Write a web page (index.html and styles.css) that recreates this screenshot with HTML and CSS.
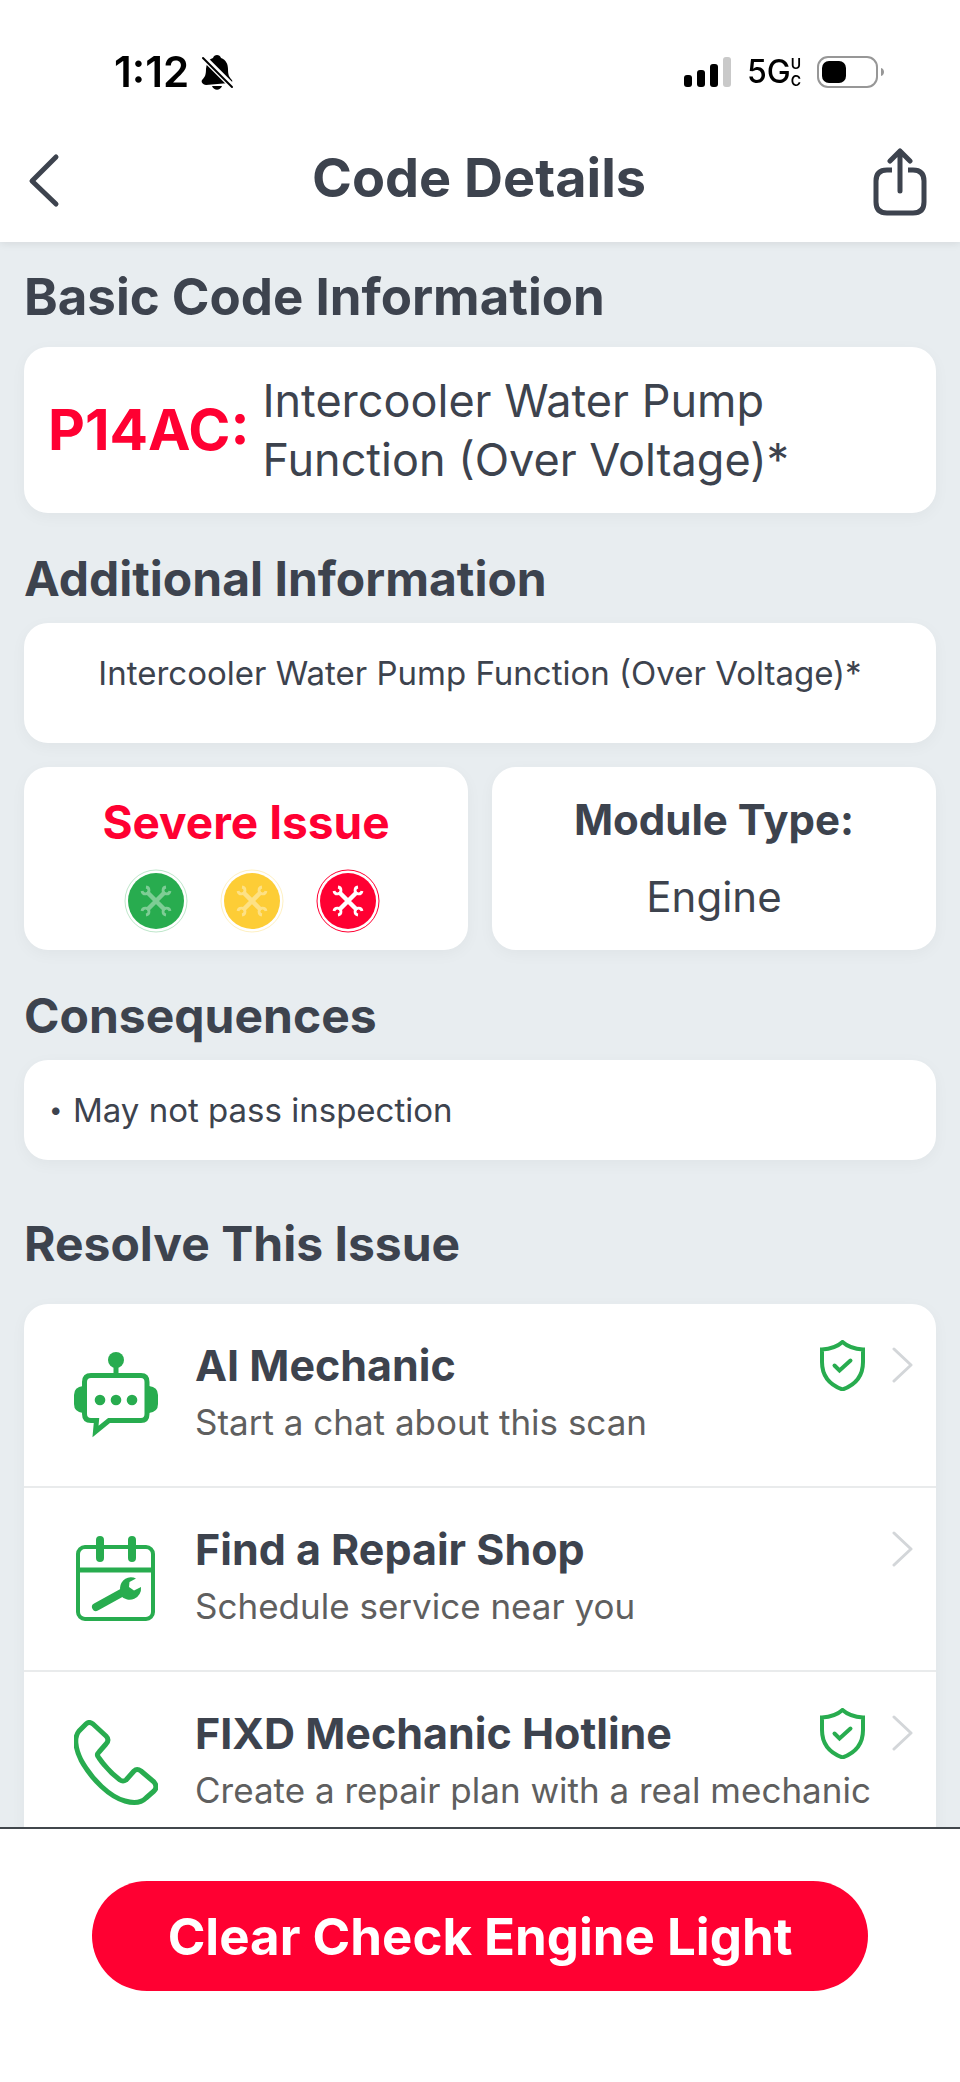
FILE: index.html
```html
<!DOCTYPE html>
<html lang="en">
<head>
  <meta charset="UTF-8" />
  <meta name="viewport" content="width=device-width, initial-scale=1" />
  <title>Code Details</title>
  <link rel="stylesheet" href="styles.css">
</head>
<body>
  <!-- Shared icons -->
  <svg class="sprite" aria-hidden="true">
    <symbol id="wrenches" viewBox="0 0 64 64">
      <g fill="none" stroke="currentColor">
        <path stroke-width="4.5" d="M23 23L41 41M41 23L23 41" />
        <path stroke-width="2.8" d="M22 18A3.5 3.5 0 1 1 18 22M42 18A3.5 3.5 0 1 0 46 22M22 46A3.5 3.5 0 1 0 18 42M42 46A3.5 3.5 0 1 1 46 42" />
      </g>
    </symbol>
    <symbol id="shield" viewBox="0 0 45 51">
      <g fill="none" stroke="currentColor" stroke-width="4">
        <path d="M22.5 2C17 7 10 9 2 9.5V22C2 36 10 45 22.5 49.5C35 45 43 36 43 22V9.5C35 9 28 7 22.5 2Z" />
        <path stroke-linecap="round" d="M14.5 25.5L19.5 30.5L30.5 20.5" />
      </g>
    </symbol>
    <symbol id="chevron" viewBox="0 0 21 36">
      <path fill="none" stroke="currentColor" stroke-width="3" stroke-linecap="round" stroke-linejoin="round" d="M2 2L19 18L2 34" />
    </symbol>
  </svg>

  <div class="app">
    <header class="header">
      <div class="status">
        <span class="time">1:12</span>
        <svg class="bell" viewBox="0 0 33 35" aria-hidden="true">
          <path d="M5 30C1 29 0 27 1 25C4 22 5 20 5 14C6 6 9 4 12 3C13-1 19-1 20 3C25 5 27 9 27 14C27 20 28 22 31 25C32 28 30 28 28 28Z" />
          <path d="M11 31H21C19 36 13 36 11 31Z" />
          <path stroke="#fff" stroke-width="6" d="M1 1L33 33" />
          <path stroke="#000" stroke-width="2" stroke-linecap="round" d="M2 3L31 32" />
        </svg>
        <div class="status-right">
          <svg class="signal" viewBox="0 0 47 30" aria-hidden="true">
            <rect x="0" y="18" width="8" height="12" rx="3" />
            <rect x="13" y="13" width="8" height="17" rx="3" />
            <rect x="26" y="7" width="8" height="23" rx="3" />
            <rect x="39" y="0" width="8" height="30" rx="3" fill="#c9c9c9" />
          </svg>
          <span class="network">5G<span class="uc"><span>U</span><span>C</span></span></span>
          <svg class="battery" viewBox="0 0 68 32" aria-hidden="true">
            <rect x="1" y="1" width="59" height="30" rx="10" fill="none" stroke="#979797" stroke-width="2" />
            <rect x="5" y="5" width="24" height="22" rx="7" />
            <path fill="#979797" d="M64 12C68 13 68 19 64 20Z" />
          </svg>
        </div>
      </div>
      <nav class="nav">
        <button class="nav-button" type="button" aria-label="Back">
          <svg class="back" viewBox="0 0 30 54" aria-hidden="true"><path d="M27 2L3 26L27 49" /></svg>
        </button>
        <h1>Code Details</h1>
        <button class="nav-button" type="button" aria-label="Share">
          <svg class="share" viewBox="0 0 54 68" aria-hidden="true">
            <path d="M19 22H14Q3 22 3 33V54Q3 65 14 65H40Q51 65 51 54V33Q51 22 40 22H35" />
            <path stroke-linecap="round" stroke-linejoin="round" d="M27 43V3M17 13L27 3L37 13" />
          </svg>
        </button>
      </nav>
    </header>

    <main class="content">
      <section class="basic">
        <h2>Basic Code Information</h2>
        <div class="card code">
          <strong class="code-id">P14AC:</strong>
          <p class="code-text">Intercooler Water Pump Function (Over Voltage)*</p>
        </div>
      </section>

      <section class="section">
        <h2>Additional Information</h2>
        <div class="card additional">Intercooler Water Pump Function (Over Voltage)*</div>
        <div class="pair">
          <div class="card severity">
            <h3>Severe Issue</h3>
            <div class="levels">
              <svg class="level low" viewBox="0 0 64 64" aria-hidden="true">
                <circle class="ring" cx="32" cy="32" r="31" /><circle class="disc" cx="32" cy="32" r="28" /><use href="#wrenches" />
              </svg>
              <svg class="level medium" viewBox="0 0 64 64" aria-hidden="true">
                <circle class="ring" cx="32" cy="32" r="31" /><circle class="disc" cx="32" cy="32" r="28" /><use href="#wrenches" />
              </svg>
              <svg class="level high" viewBox="0 0 64 64" aria-hidden="true">
                <circle class="ring" cx="32" cy="32" r="31" /><circle class="disc" cx="32" cy="32" r="28" /><use href="#wrenches" />
              </svg>
            </div>
          </div>
          <div class="card module">
            <h3>Module Type:</h3>
            <p>Engine</p>
          </div>
        </div>
      </section>

      <section class="section">
        <h2>Consequences</h2>
        <div class="card consequences">
          <ul>
            <li>May not pass inspection</li>
          </ul>
        </div>
      </section>

      <section class="section resolve">
        <h2>Resolve This Issue</h2>
        <div class="card list">
          <a class="row" href="#">
            <svg class="row-icon" viewBox="0 0 84 86" aria-hidden="true">
              <g fill="currentColor">
                <circle cx="42" cy="8" r="8" />
                <path d="M9 34Q0 35 0 43V52Q0 60 9 61ZM75 34Q84 35 84 43V52Q84 60 75 61Z" />
                <circle cx="26" cy="48" r="5.3" /><circle cx="42" cy="48" r="5.3" /><circle cx="58" cy="48" r="5.3" />
              </g>
              <path fill="none" stroke="currentColor" stroke-width="5" d="M42 14V23M17 23.5H67Q73 23.5 73 30V62Q73 68.5 67 68.5H35L21.5 79.5L22.5 68.5H17Q10.5 68.5 10.5 62V30Q10.5 23.5 17 23.5Z" />
            </svg>
            <div class="row-body">
              <div class="row-top">
                <span class="row-title">AI Mechanic</span>
                <svg class="shield" aria-hidden="true"><use href="#shield" /></svg>
                <svg class="chevron" aria-hidden="true"><use href="#chevron" /></svg>
              </div>
              <div class="row-text">Start a chat about this scan</div>
            </div>
          </a>
          <a class="row" href="#">
            <svg class="row-icon" viewBox="0 0 84 86" aria-hidden="true">
              <g fill="none" stroke="currentColor">
                <rect x="4" y="11" width="75" height="72" rx="7" stroke-width="4" />
                <path stroke-width="5" d="M4 34H79" />
                <path stroke-width="8" stroke-linecap="round" d="M26 4V22M58 4V22M22 71L51 55" />
              </g>
              <path fill="currentColor" d="M62 42.5A11 11 0 0 0 46 52L47 60A11.5 11.5 0 0 0 67 51L60 54.5L55 51L55.5 46Z" />
            </svg>
            <div class="row-body">
              <div class="row-top">
                <span class="row-title">Find a Repair Shop</span>
                <svg class="chevron" aria-hidden="true"><use href="#chevron" /></svg>
              </div>
              <div class="row-text">Schedule service near you</div>
            </div>
          </a>
          <a class="row" href="#">
            <svg class="row-icon" viewBox="0 0 84 86" aria-hidden="true">
              <path fill="none" stroke="currentColor" stroke-width="5" stroke-linejoin="round" d="M12 4L5 11C0 17 1 28 7 40C18 60 36 77 51 81C61 84 68 82 72 78L80 71Q84 67 80 62L67 51Q63 48 60 51L52 60Q49 62 46 60Q34 51 25 38Q22 35 25 32L32 24Q36 20 32 16L19 4Q15 1 12 4Z" />
            </svg>
            <div class="row-body">
              <div class="row-top">
                <span class="row-title">FIXD Mechanic Hotline</span>
                <svg class="shield" aria-hidden="true"><use href="#shield" /></svg>
                <svg class="chevron" aria-hidden="true"><use href="#chevron" /></svg>
              </div>
              <div class="row-text">Create a repair plan with a real mechanic</div>
            </div>
          </a>
        </div>
      </section>
    </main>

    <footer class="footer">
      <button class="clear-button" type="button">Clear Check Engine Light</button>
    </footer>
  </div>
</body>
</html>
```
FILE: styles.css
```css
* {
  box-sizing: border-box;
}
body {
  margin: 0;
  font-family: Inter, "Liberation Sans", sans-serif;
  color: #3d434e;
  background-color: #fff;
}
h1, h2, h3, p, ul {
  margin: 0;
  padding: 0;
}
svg {
  display: block;
  flex: none;
}
button {
  font-family: inherit;
  border: 0;
  cursor: pointer;
}
.sprite {
  display: none;
}
.app {
  display: flex;
  flex-direction: column;
  height: 100vh;
}

/* Header */
.header {
  position: relative;
  background-color: #fff;
  box-shadow: 0 2px 8px rgba(0,0,0,0.08);
}
.status {
  display: flex;
  align-items: center;
  padding: 48px 75px 18px 114px;
  line-height: 48px;
  color: #000;
}
.time {
  font-size: 42px;
  font-weight: 600;
}
.bell {
  width: 33px;
  height: 35px;
  margin-left: 12px;
}
.status-right {
  display: flex;
  align-items: center;
  gap: 16px;
  margin-left: auto;
}
.signal {
  width: 47px;
  height: 30px;
}
.network {
  display: flex;
  align-items: center;
  font-size: 32px;
  font-weight: 500;
}
.uc {
  display: flex;
  flex-direction: column;
  font-size: 14px;
  line-height: 17px;
  font-weight: 600;
}
.battery {
  width: 68px;
  height: 32px;
}
.nav {
  display: flex;
  align-items: center;
  justify-content: space-between;
  padding: 0 33px 0 29px;
  height: 128px;
}
.nav-button {
  padding: 8px 0 0;
  background: none;
  color: inherit;
}
.nav svg {
  fill: none;
  stroke: currentColor;
  stroke-width: 5;
}
.back {
  width: 30px;
  height: 54px;
  margin-right: 26px;
  overflow: visible;
  stroke-linecap: round;
  stroke-linejoin: round;
}
.share {
  width: 54px;
  height: 68px;
}
h1 {
  font-size: 54px;
  line-height: 64px;
  font-weight: 700;
}

/* Content */
.content {
  flex: 1;
  min-height: 0;
  padding: 25px 24px 0;
  overflow-y: auto;
  scrollbar-width: none;
  background-color: #e8edf0;
}
h2 {
  margin-bottom: 14px;
  font-size: 48px;
  line-height: 60px;
  font-weight: 700;
}
.basic h2 {
  margin-bottom: 20px;
  font-size: 51px;
}
.section {
  margin-top: 36px;
}
.card {
  background-color: #fff;
  border-radius: 24px;
  box-shadow: 0 4px 16px rgba(0,0,0,0.04);
}
.code {
  display: flex;
  align-items: center;
  gap: 13px;
  padding: 24px;
}
.code-id {
  font-size: 57px;
  line-height: 60px;
  font-weight: 700;
  color: #ff0032;
}
.code-text {
  font-size: 45px;
  line-height: 59px;
}
.additional {
  padding: 28px 24px 48px;
  font-size: 33px;
  line-height: 44px;
  text-align: center;
}
.pair {
  display: grid;
  grid-template-columns: 1fr 1fr;
  gap: 24px;
  margin-top: 24px;
  text-align: center;
}
.severity {
  padding: 27px 16px 17px;
}
.severity h3 {
  font-size: 46px;
  line-height: 56px;
  font-weight: 700;
  color: #ff0032;
}
.levels {
  display: flex;
  justify-content: center;
  gap: 32px;
  margin-top: 19px;
  padding-left: 12px;
}
.level {
  width: 64px;
  height: 64px;
}
.ring {
  fill: none;
  stroke: currentColor;
}
.disc {
  fill: currentColor;
}
.level use {
  color: #fff;
}
.low {
  color: #28ac4f;
}
.medium {
  color: #fdcd36;
}
.high {
  color: #ff0032;
}
.low .ring, .medium .ring {
  opacity: 0.3;
}
.low use, .medium use {
  opacity: 0.4;
}
.module {
  padding: 27px 16px;
}
.module h3 {
  font-size: 42px;
  line-height: 52px;
  font-weight: 700;
}
.module p {
  margin-top: 25px;
  font-size: 42px;
  line-height: 52px;
}
.consequences {
  padding: 28px 25px;
  font-size: 33px;
  line-height: 44px;
}
.consequences li {
  display: flex;
}
.consequences li::before {
  content: "•";
  width: 24px;
  font-size: 24px;
}

/* Resolve list */
.resolve {
  margin-top: 54px;
}
.resolve h2 {
  margin-bottom: 30px;
}
.row {
  display: flex;
  align-items: center;
  gap: 37px;
  padding: 0 23px 0 50px;
  border-bottom: 2px solid #e9ebec;
  color: inherit;
  text-decoration: none;
}
.row:last-child {
  border-bottom: 0;
}
.row-icon {
  width: 84px;
  height: 86px;
  color: #28ac4f;
}
.row-body {
  flex: 1;
  padding: 35px 0 42px;
}
.row-top {
  display: flex;
  align-items: center;
}
.row-title {
  flex: 1;
  font-size: 43px;
  line-height: 52px;
  font-weight: 700;
}
.row-text {
  margin-top: 9px;
  font-size: 35px;
  line-height: 44px;
  color: #5f5f5f;
}
.shield {
  width: 45px;
  height: 51px;
  color: #28ac4f;
}
.chevron {
  width: 21px;
  height: 36px;
  margin-left: 27px;
  color: #d3d6d9;
}

/* Footer */
.footer {
  padding: 52px 92px 91px;
  border-top: 2px solid #41474c;
  background-color: #fff;
}
.clear-button {
  width: 100%;
  height: 110px;
  border-radius: 55px;
  background-color: #ff0032;
  color: #fff;
  font-size: 51px;
  font-weight: 700;
}
```
